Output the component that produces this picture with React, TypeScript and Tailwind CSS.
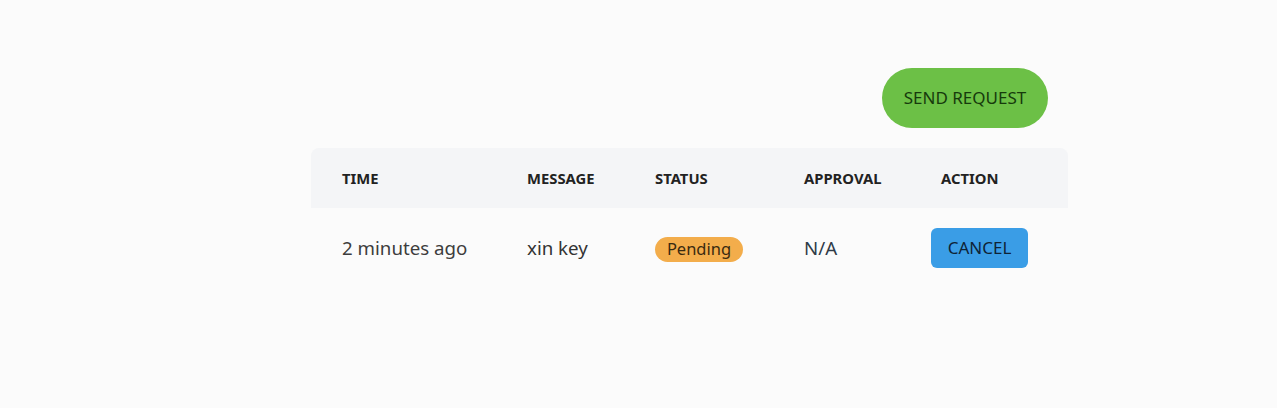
import type { FC } from 'react';

interface Request {
  time: string;
  message: string;
  status: string;
  approval: string;
}

const rows: Request[] = [
  { time: '2 minutes ago', message: 'xin key', status: 'Pending', approval: 'N/A' },
];

const cols = 'grid grid-cols-[185px_128px_149px_127px_1fr] pl-[31px] items-center';

const App: FC = () => {
  return (
    <div className="min-h-screen w-full bg-[#fbfbfb] font-['Noto_Sans','Open_Sans',sans-serif]">
      <div className="w-[757px] pt-[68px] ml-[311px]">
        <div className="flex justify-end pr-[20px]">
          <button className="h-[60px] w-[166px] rounded-full bg-[#6cc046] text-[17px] text-[#163a0c]">
            SEND REQUEST
          </button>
        </div>

        <div className="mt-[20px]">
          {/* header */}
          <div className={`${cols} h-[60px] rounded-t-lg bg-[#f4f5f7] text-[14.8px] font-bold text-[#222]`}>
            <div>TIME</div>
            <div>MESSAGE</div>
            <div>STATUS</div>
            <div>APPROVAL</div>
            <div className="pl-[10px]">ACTION</div>
          </div>

          {/* rows */}
          {rows.map((r) => (
            <div key={r.time} className={`${cols} h-[80px] text-[18.7px] text-[#3d3d3d]`}>
              <div>{r.time}</div>
              <div className="text-[#333]">{r.message}</div>
              <div>
                <span className="inline-flex h-[25px] w-[88px] items-center justify-center rounded-full bg-[#f3ad4b] text-[16.5px] text-[#3a2a10]">
                  {r.status}
                </span>
              </div>
              <div className="text-[#2f3b48]">{r.approval}</div>
              <div>
                <button className="h-[40px] w-[97px] rounded-md bg-[#3a9de6] text-[17px] text-[#0f2336]">
                  CANCEL
                </button>
              </div>
            </div>
          ))}
        </div>
      </div>
    </div>
  );
};

export default App;
